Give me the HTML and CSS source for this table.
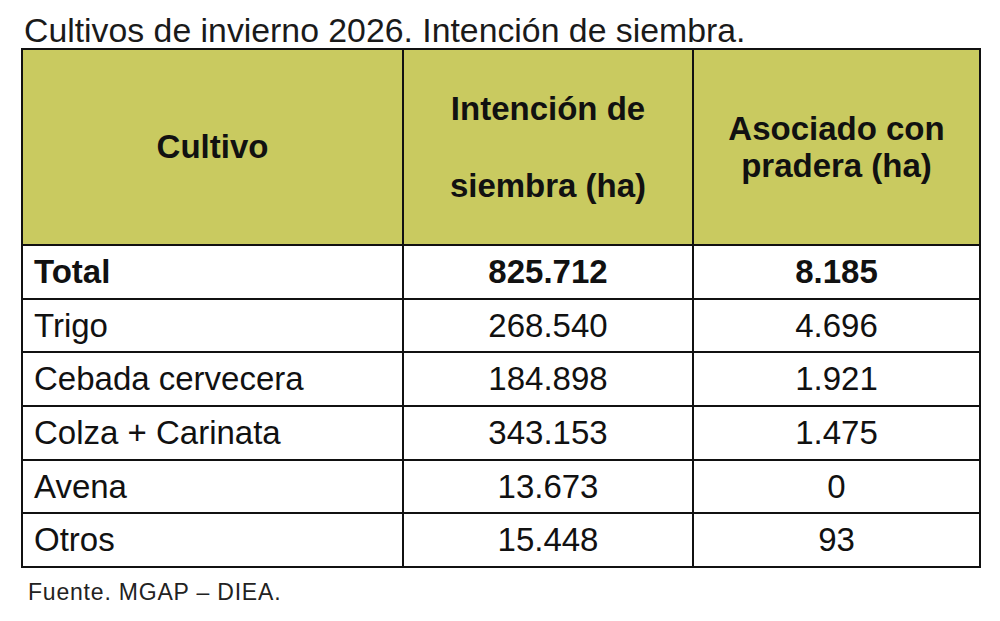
FILE: index.html
```html
<!DOCTYPE html>
<html lang="es">
<head>
<meta charset="utf-8">
<title>Cultivos de invierno 2026</title>
<link rel="stylesheet" href="styles.css">
</head>
<body>
<div class="page">
  <h1 class="title">Cultivos de invierno 2026. Intención de siembra.</h1>
  <table class="data">
    <colgroup>
      <col class="c1"><col class="c2"><col class="c3">
    </colgroup>
    <thead>
      <tr class="head-row">
        <th>Cultivo</th>
        <th class="wide-lines">Intención de<br>siembra (ha)</th>
        <th class="tight-lines">Asociado con<br>pradera (ha)</th>
      </tr>
    </thead>
    <tbody>
      <tr class="total"><td class="name">Total</td><td>825.712</td><td>8.185</td></tr>
      <tr><td class="name">Trigo</td><td>268.540</td><td>4.696</td></tr>
      <tr><td class="name">Cebada cervecera</td><td>184.898</td><td>1.921</td></tr>
      <tr><td class="name">Colza + Carinata</td><td>343.153</td><td>1.475</td></tr>
      <tr><td class="name">Avena</td><td>13.673</td><td>0</td></tr>
      <tr><td class="name">Otros</td><td>15.448</td><td>93</td></tr>
    </tbody>
  </table>
  <p class="source">Fuente. MGAP – DIEA.</p>
</div>
</body>
</html>
```

FILE: styles.css
```css
html, body {
  margin: 0;
  padding: 0;
  background: #ffffff;
}

body {
  font-family: "Liberation Sans", Arial, sans-serif;
  color: #111111;
}

.page {
  padding-top: 14px;
}

.title {
  margin: 0 0 1px 24px;
  font-size: 33.8px;
  line-height: 33px;
  font-weight: normal;
  color: #1a1a1a;
  white-space: nowrap;
}

.data {
  margin-left: 21px;
  width: 958px;
  border-collapse: collapse;
  table-layout: fixed;
  border: 2px solid #111111;
}

.c1 { width: 381px; }
.c2 { width: 290px; }
.c3 { width: 287px; }

.data th,
.data td {
  border: 2px solid #111111;
  padding: 0;
  font-size: 33px;
  color: #111111;
}

.data th {
  background: #c9ca60;
  font-weight: bold;
  text-align: center;
  vertical-align: middle;
}

.head-row th {
  height: 194px;
}

.wide-lines {
  line-height: 77px;
  padding-top: 6px;
}

.tight-lines {
  line-height: 37px;
}

.data td {
  height: 51.7px;
  line-height: 36px;
  text-align: center;
  vertical-align: middle;
}

.data td.name {
  text-align: left;
  padding-left: 11px;
}

.total td {
  font-weight: bold;
}

.source {
  margin: 12px 0 0 28px;
  font-size: 23px;
  line-height: 24px;
  letter-spacing: 0.8px;
  color: #222222;
}
```
